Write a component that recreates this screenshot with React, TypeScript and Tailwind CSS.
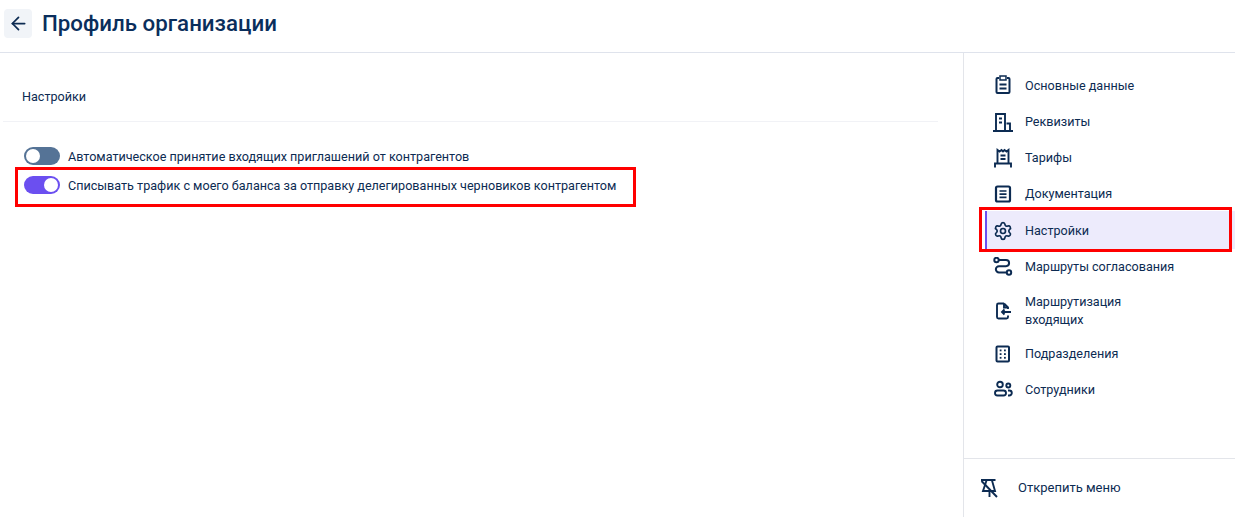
import React from 'react';
import { ArrowLeft, Settings } from 'lucide-react';

const font = "font-['Roboto',sans-serif]";

const ClipboardIcon = () => (
  <svg width="20" height="20" viewBox="0 0 20 20" fill="none" stroke="currentColor" strokeWidth="2" className="-mt-[3px]">
    <path d="M6 3H4.500a1 1 0 0 0-1 1v13a1 1 0 0 0 1 1h11a1 1 0 0 0 1-1V4a1 1 0 0 0-1-1H14" />
    <rect x="7" y="1" width="6" height="4" strokeWidth="1.500" />
    <path d="M6.500 9.500h7M6.500 13.500h7" />
  </svg>
);

const BuildingIcon = () => (
  <svg width="20" height="20" viewBox="0 0 20 20" fill="none" stroke="currentColor" strokeWidth="1.900">
    <path d="M3 19V2h9v17M13.500 11.500H17V19M0 19h20M6 6.500h3M6 10.500h3" />
  </svg>
);

const TariffIcon = () => (
  <svg width="20" height="20" viewBox="0 0 20 20" fill="none" stroke="currentColor" strokeWidth="1.900">
    <path d="M4.500 15.500V2l2 1.500L8.500 2 10 3.500 11.500 2l2 1.500 2-1.500v13.500M2 19.500v-4h16v4M7.500 7.500h5M7.500 11h5" />
  </svg>
);

const DocIcon = () => (
  <svg width="20" height="20" viewBox="0 0 20 20" fill="none" stroke="currentColor" strokeWidth="2.200">
    <rect x="3" y="2.500" width="14" height="15" rx="1.500" />
    <path d="M6.500 7h7M6.500 10.200h7M6.500 13.400h7" strokeWidth="1.700" />
  </svg>
);

const RouteIcon = () => (
  <svg width="20" height="20" viewBox="0 0 20 20" fill="none" stroke="currentColor" strokeWidth="2">
    <circle cx="3.500" cy="3" r="2.200" />
    <circle cx="16" cy="15.500" r="2.200" />
    <path d="M5.700 3h7.300a3 3 0 0 1 0 6.200H6a3.100 3.100 0 0 0 0 6.300h7.800" />
  </svg>
);

const IncomingIcon = () => (
  <svg width="20" height="20" viewBox="0 0 20 20" fill="none" stroke="currentColor" strokeWidth="1.900">
    <path d="M11 2.500H5.500A1.500 1.500 0 0 0 4 4v12a1.500 1.500 0 0 0 1.500 1.500h8A1.500 1.500 0 0 0 15 16v-1.500M11 2.500l4 4V8M11 2.500v4h4" />
    <path d="M18 11H9M11.500 8.500 9 11l2.500 2.500" />
  </svg>
);

const UnitsIcon = () => (
  <svg width="20" height="20" viewBox="0 0 20 20" fill="none">
    <rect x="3.500" y="2.500" width="12.500" height="15" rx="1" stroke="currentColor" strokeWidth="2" />
    <g fill="currentColor">
      <rect x="6.700" y="5.500" width="1.800" height="1.800" />
      <rect x="11" y="5.500" width="1.800" height="1.800" />
      <rect x="6.700" y="9.200" width="1.800" height="1.800" />
      <rect x="11" y="9.200" width="1.800" height="1.800" />
      <rect x="6.700" y="12.900" width="1.800" height="1.800" />
      <rect x="11" y="12.900" width="1.800" height="1.800" />
    </g>
  </svg>
);

const PeopleIcon = () => (
  <svg width="20" height="20" viewBox="0 0 20 20" fill="none" stroke="currentColor" strokeWidth="1.900">
    <circle cx="7" cy="4.500" r="2.800" />
    <circle cx="15.300" cy="5.500" r="2" />
    <rect x="2" y="10.500" width="11" height="5" rx="2.500" />
    <path d="M15 10.500h1.300a2.500 2.500 0 0 1 0 5H15" />
  </svg>
);

const PinIcon = () => (
  <svg width="20" height="20" viewBox="0 0 20 20" fill="none" stroke="currentColor" strokeWidth="1.900">
    <path d="M2 2h14.500M7.500 2.500 4 13h12L13 2.500M10.500 13.500V19" />
    <path d="M2.500 3 18 19" />
  </svg>
);

const GearIcon = () => <Settings size={20} strokeWidth={2} />;

const menu = [
  { label: 'Основные данные', icon: ClipboardIcon },
  { label: 'Реквизиты', icon: BuildingIcon },
  { label: 'Тарифы', icon: TariffIcon },
  { label: 'Документация', icon: DocIcon },
  { label: 'Настройки', icon: GearIcon, active: true },
  { label: 'Маршруты согласования', icon: RouteIcon },
  { label: 'Маршрутизация входящих', icon: IncomingIcon, tall: true },
  { label: 'Подразделения', icon: UnitsIcon },
  { label: 'Сотрудники', icon: PeopleIcon },
];

const Toggle: React.FC<{ on?: boolean; label: string }> = ({ on, label }) => (
  <div className="flex items-center h-[18px]">
    <span className={`flex items-center w-9 h-[18px] rounded-full p-0.5 ${on ? 'justify-end bg-[#6b4ff0]' : 'justify-start bg-[#557396]'}`}>
      <span className="w-[14px] h-[14px] rounded-full bg-white" />
    </span>
    <span className="ml-2 pt-px text-[12.6px] leading-[18px] text-[#0c2b52]">{label}</span>
  </div>
);

export default function App() {
  return (
    <div className={`${font} relative w-[1235px] h-[517px] overflow-hidden bg-white flex flex-col text-[#0c2b52]`}>
      <header className="h-[53px] shrink-0 flex items-start pt-[9px] pl-1 border-b border-[#dfe3ec]">
        <button className="w-7 h-[29px] rounded bg-[#f1f4f8] flex items-center justify-center">
          <ArrowLeft size={21} strokeWidth={2} />
        </button>
        <h1 className="ml-[10px] text-[22.3px] leading-[29px] font-medium text-[#0a2e5c]">Профиль организации</h1>
      </header>

      <div className="flex flex-1 min-h-0">
        <main className="w-[963px] shrink-0 pl-[3px] pr-[25px]">
          <div className="h-[69px] pl-[19px] pt-[35px] text-[12.6px] leading-[18px] border-b border-[#f1f2f6]">Настройки</div>
          <div className="pt-[25px] pl-[21px] flex flex-col gap-[11px]">
            <Toggle label="Автоматическое принятие входящих приглашений от контрагентов" />
            <Toggle on label="Списывать трафик с моего баланса за отправку делегированных черновиков контрагентом" />
          </div>
        </main>

        <aside className="flex-1 flex flex-col border-l border-[#e3e5ea]">
          <nav className="flex-1 pt-[15px] pl-[21px]">
            {menu.map(({ label, icon: Icon, active, tall }) => (
              <div
                key={label}
                className={`flex items-center text-[12.6px] leading-[18px] ${tall ? 'h-[51px]' : 'h-9'} ${active ? '!h-[38px] -mt-px pt-[2px] bg-[#edebfc] border-l-2 border-[#6b4ff0] pl-[6px]' : 'pl-2'}`}
              >
                <span className="w-5 h-5 shrink-0 flex items-center justify-center">
                  <Icon />
                </span>
                <span className="ml-[12px] w-[150px]">{label}</span>
              </div>
            ))}
          </nav>
          <div className="h-[59px] shrink-0 border-t border-[#e3e5ea] flex items-center pl-[15px] text-[13px]">
            <PinIcon />
            <span className="ml-[19px]">Открепить меню</span>
          </div>
        </aside>
      </div>

      {/* red annotation frames */}
      <div className="absolute left-[15px] top-[167px] w-[621px] h-[40px] border-[3px] border-[#ff0000]" />
      <div className="absolute left-[979px] top-[207px] w-[253px] h-[45px] border-[3px] border-[#ff0000]" />
    </div>
  );
}
